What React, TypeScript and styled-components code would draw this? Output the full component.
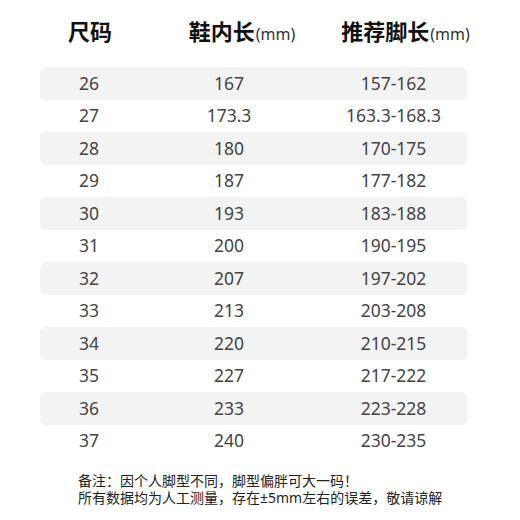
import React from "react";
import styled, { createGlobalStyle } from "styled-components";

const Global = createGlobalStyle`
  html, body { margin: 0; padding: 0; background: #ffffff; }
  body { font-family: "Noto Sans", "Noto Sans CJK SC", sans-serif; }
`;

const Page = styled.div`
  width: 520px;
  height: 520px;
  box-sizing: border-box;
  padding: 0 53px 0 40px;
  display: flex;
  flex-direction: column;
`;

const HeaderRow = styled.div`
  display: grid;
  grid-template-columns: 100px 204px 123px;
  height: 67px;
  box-sizing: border-box;
  padding-bottom: 7px;
  align-items: center;
`;

const HeadCell = styled.div`
  display: flex;
  justify-content: center;
  align-items: baseline;
  white-space: nowrap;
  font-family: "Noto Sans CJK SC", sans-serif;
  font-weight: 700;
  font-size: 22px;
  color: #111;
  line-height: 1;
`;

const Unit = styled.span`
  font-family: "Noto Sans", "Noto Sans CJK SC", sans-serif;
  font-weight: 400;
  font-size: 16px;
  color: #333;
  margin-left: 1px;
`;

const Table = styled.div`
  display: flex;
  flex-direction: column;
`;

const Row = styled.div<{ $striped: boolean }>`
  display: grid;
  grid-template-columns: 98px 182px 147px;
  height: 32.5px;
  align-items: center;
  border-radius: 6px;
  background: ${(p) => (p.$striped ? "#f3f3f3" : "transparent")};
`;

const Cell = styled.div`
  text-align: center;
  font-size: 17.5px;
  color: #444;
  line-height: 1;
`;

const Note = styled.div`
  margin-top: 15px;
  padding-left: 38px;
  font-family: "Noto Sans CJK SC", sans-serif;
  font-size: 14px;
  line-height: 17px;
  color: #222;
  white-space: nowrap;
`;

const Latin = styled.span`
  font-family: "Noto Sans", sans-serif;
`;

const rows: [string, string, string][] = [
  ["26", "167", "157-162"],
  ["27", "173.3", "163.3-168.3"],
  ["28", "180", "170-175"],
  ["29", "187", "177-182"],
  ["30", "193", "183-188"],
  ["31", "200", "190-195"],
  ["32", "207", "197-202"],
  ["33", "213", "203-208"],
  ["34", "220", "210-215"],
  ["35", "227", "217-222"],
  ["36", "233", "223-228"],
  ["37", "240", "230-235"],
];

export default function App() {
  return (
    <>
      <Global />
      <Page>
        <HeaderRow>
          <HeadCell>尺码</HeadCell>
          <HeadCell>
            鞋内长<Unit>(mm)</Unit>
          </HeadCell>
          <HeadCell>
            推荐脚长<Unit>(mm)</Unit>
          </HeadCell>
        </HeaderRow>
        <Table>
          {rows.map((r, i) => (
            <Row key={r[0]} $striped={i % 2 === 0}>
              <Cell>{r[0]}</Cell>
              <Cell>{r[1]}</Cell>
              <Cell>{r[2]}</Cell>
            </Row>
          ))}
        </Table>
        <Note>
          <div>备注：因个人脚型不同，脚型偏胖可大一码！</div>
          <div>
            所有数据均为人工测量，存在<Latin>±5mm</Latin>左右的误差，敬请谅解
          </div>
        </Note>
      </Page>
    </>
  );
}
